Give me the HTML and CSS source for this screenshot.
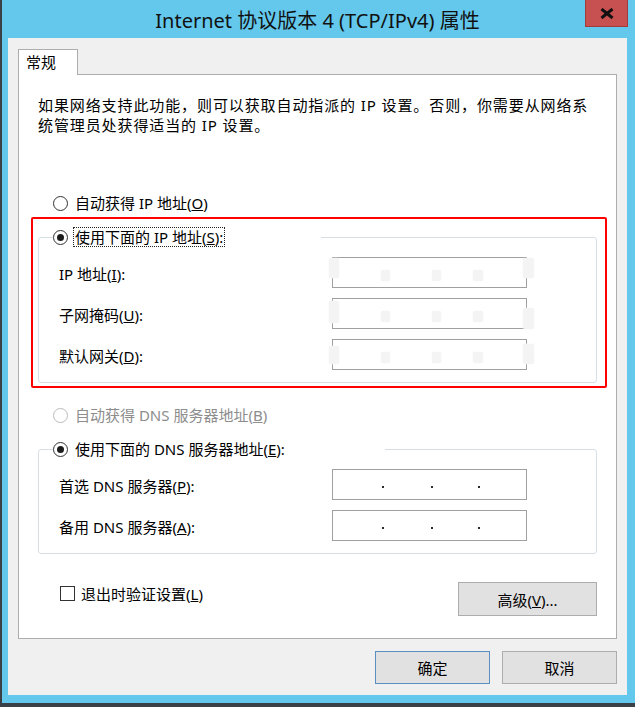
FILE: index.html
```html
<!DOCTYPE html>
<html lang="zh-CN">
<head>
  <meta charset="UTF-8">
  <title>Internet 协议版本 4 (TCP/IPv4) 属性</title>
  <link rel="stylesheet" href="styles.css">
</head>
<body>
  <div class="window">
    <div class="titlebar">
      <span class="title">Internet 协议版本 4 (TCP/IPv4) 属性</span>
      <button class="close" aria-label="关闭">
        <svg width="14" height="11" viewBox="0 0 14 11"><path d="M1.5 1 L12.5 10 M12.5 1 L1.5 10" stroke="#111" stroke-width="3" fill="none"/></svg>
      </button>
    </div>

    <div class="client">
      <div class="tabs"><div class="tab">常规</div></div>

      <div class="panel">
        <p class="intro">如果网络支持此功能，则可以获取自动指派的 IP 设置。否则，你需要从网络系<br>统管理员处获得适当的 IP 设置。</p>

        <div class="option first"><span class="radio"></span><span class="label">自动获得 IP 地址(<u>O</u>)</span></div>

        <div class="highlight">
          <fieldset class="group">
            <legend class="option legend-ip"><span class="radio checked"></span><span class="label focus">使用下面的 IP 地址(<u>S</u>):</span></legend>
            <div class="rows rows-ip">
              <label>IP 地址(<u>I</u>):</label>
              <div class="field">
                <span class="smudge left"></span><span class="smudge right"></span>
                <span class="smudge d1"></span><span class="smudge d2"></span><span class="smudge d3"></span>
              </div>
              <label>子网掩码(<u>U</u>):</label>
              <div class="field second">
                <span class="smudge left"></span><span class="smudge right"></span>
                <span class="smudge d1"></span><span class="smudge d2"></span><span class="smudge d3"></span>
              </div>
              <label>默认网关(<u>D</u>):</label>
              <div class="field third">
                <span class="smudge left"></span><span class="smudge right"></span>
                <span class="smudge d1"></span><span class="smudge d2"></span><span class="smudge d3"></span>
              </div>
            </div>
          </fieldset>
        </div>

        <div class="option disabled"><span class="radio"></span><span class="label">自动获得 DNS 服务器地址(<u>B</u>)</span></div>

        <fieldset class="group dns">
          <legend class="option legend-dns"><span class="radio checked"></span><span class="label">使用下面的 DNS 服务器地址(<u>E</u>):</span></legend>
          <div class="rows rows-dns">
            <label>首选 DNS 服务器(<u>P</u>):</label>
            <div class="field"><span class="seg s1"></span><span class="dot"></span><span class="seg s2"></span><span class="dot"></span><span class="seg s3"></span><span class="dot"></span></div>
            <label>备用 DNS 服务器(<u>A</u>):</label>
            <div class="field"><span class="seg s1"></span><span class="dot"></span><span class="seg s2"></span><span class="dot"></span><span class="seg s3"></span><span class="dot"></span></div>
          </div>
        </fieldset>

        <div class="bottom-row">
          <div class="check"><span class="checkbox"></span><span>退出时验证设置(<u>L</u>)</span></div>
          <button class="btn advanced">高级(<u>V</u>)...</button>
        </div>
      </div>

      <div class="actions">
        <button class="btn default">确定</button>
        <button class="btn">取消</button>
      </div>
    </div>
  </div>
</body>
</html>
```

FILE: styles.css
```css
body {
  margin: 0;
  font-family: "Noto Sans", "Noto Sans CJK SC", sans-serif;
  font-size: 15px;
  color: #000;
}
.window {
  width: 635px;
  height: 707px;
  box-sizing: border-box;
  background: #63c8ec;
  border-left: 2px solid #3b4046;
  border-bottom: 4px solid #3b4046;
  padding: 0 8px 8px 6px;
  display: flex;
  flex-direction: column;
}
.titlebar {
  height: 38px;
  flex: none;
  position: relative;
  display: flex;
  align-items: center;
  justify-content: center;
}
.title {
  font-size: 20px;
  color: #111;
}
.close {
  position: absolute;
  top: 0;
  right: -1px;
  width: 43px;
  height: 27px;
  box-sizing: border-box;
  padding: 0;
  background: #c75050;
  border: 1px solid #a03c3c;
  border-top: none;
  display: flex;
  align-items: center;
  justify-content: center;
}
.client {
  flex: 1;
  background: #f0f0f0;
  padding: 11px 10px 0;
}
.tabs {
  display: flex;
}
.tab {
  width: 60px;
  height: 26px;
  box-sizing: border-box;
  border: 1px solid #adadad;
  border-bottom: none;
  background: #fff;
  margin-bottom: -1px;
  position: relative;
  z-index: 1;
  padding-left: 7px;
  line-height: 24px;
}
.panel {
  height: 565px;
  box-sizing: border-box;
  border: 1px solid #adadad;
  background: #fff;
  padding: 0 19px;
}
.intro {
  margin: 20px 0 0;
  line-height: 20px;
  letter-spacing: 0.9px;
  white-space: nowrap;
}
.option {
  display: flex;
  align-items: center;
  height: 20px;
  padding-left: 15px;
}
.option.first {
  margin-top: 58px;
}
.radio {
  width: 15px;
  height: 15px;
  box-sizing: border-box;
  border: 1px solid #333;
  border-radius: 50%;
  background: #fff;
  margin-right: 5px;
  display: flex;
  align-items: center;
  justify-content: center;
}
.radio.checked::after {
  content: "";
  width: 7px;
  height: 7px;
  border-radius: 50%;
  background: #1b1b1b;
}
.label {
  padding: 0 1px;
  border: 1px dotted transparent;
  line-height: 18px;
  white-space: nowrap;
}
.label.focus {
  border-color: #222;
}
.disabled {
  margin-top: 17px;
  color: #8d8d8d;
}
.disabled .radio {
  border-color: #bcbcbc;
}
.highlight {
  margin: 4px -10px 0 -7px;
  border: 2px solid #f00;
  border-radius: 2px;
  padding: 8px 8px 3px 5px;
}
.group {
  margin: 0;
  padding: 0;
  border: 1px solid #d5dfe5;
  border-radius: 3px;
}
.group legend.option {
  padding: 0;
  margin-left: 14px;
}
.legend-ip {
  width: 268px;
}
.legend-dns {
  width: 332px;
}
.group.dns {
  margin-top: 14px;
}
.rows {
  display: grid;
  grid-template-columns: 273px 195px;
  row-gap: 10px;
  align-items: center;
  padding-left: 20px;
}
.rows label {
  padding-top: 2px;
}
.rows-ip {
  padding-top: 10px;
  padding-bottom: 12px;
}
.rows-dns {
  padding-top: 10px;
  padding-bottom: 12px;
}
.field {
  height: 31px;
  box-sizing: border-box;
  border: 1px solid #a0a0a0;
  background: #fff;
  position: relative;
  display: flex;
}
.seg {
  flex: none;
}
.s1 { width: 49px; }
.s2 { width: 47px; }
.s3 { width: 45px; }
.dot {
  width: 2px;
  height: 2px;
  margin-top: 16px;
  background: #2b2b2b;
}
.smudge {
  position: absolute;
  background: #f4f4f4;
  border-radius: 2px;
  box-shadow: 0 0 2px #f4f4f4;
}
.smudge.left { left: -4px; top: 0; width: 10px; height: 20px; }
.smudge.right { left: 190px; top: 0; width: 11px; height: 20px; }
.smudge.d1 { left: 48px; top: 12px; width: 9px; height: 11px; }
.smudge.d2 { left: 99px; top: 12px; width: 9px; height: 11px; }
.smudge.d3 { left: 140px; top: 12px; width: 10px; height: 11px; }
.second .smudge.left { top: 2px; height: 22px; }
.second .smudge.right { top: 9px; height: 21px; }
.third .smudge.left { top: 6px; height: 18px; }
.third .smudge.right { top: 4px; height: 20px; }
.bottom-row {
  display: flex;
  justify-content: space-between;
  align-items: flex-start;
  margin-top: 28px;
  padding-left: 22px;
}
.check {
  display: flex;
  align-items: center;
  height: 20px;
  margin-top: 1px;
}
.checkbox {
  width: 15px;
  height: 15px;
  box-sizing: border-box;
  border: 1px solid #333;
  background: #fff;
  margin-right: 6px;
}
.btn {
  font-family: inherit;
  font-size: 15px;
  color: #000;
  background: #e1e1e1;
  border: 1px solid #adadad;
  padding: 0;
  width: 115px;
  height: 33px;
}
.btn.advanced {
  width: 139px;
  height: 34px;
}
.btn.default {
  border-color: #5a8ec0;
}
.actions {
  display: flex;
  justify-content: flex-end;
  gap: 12px;
  margin-top: 12px;
}
```
